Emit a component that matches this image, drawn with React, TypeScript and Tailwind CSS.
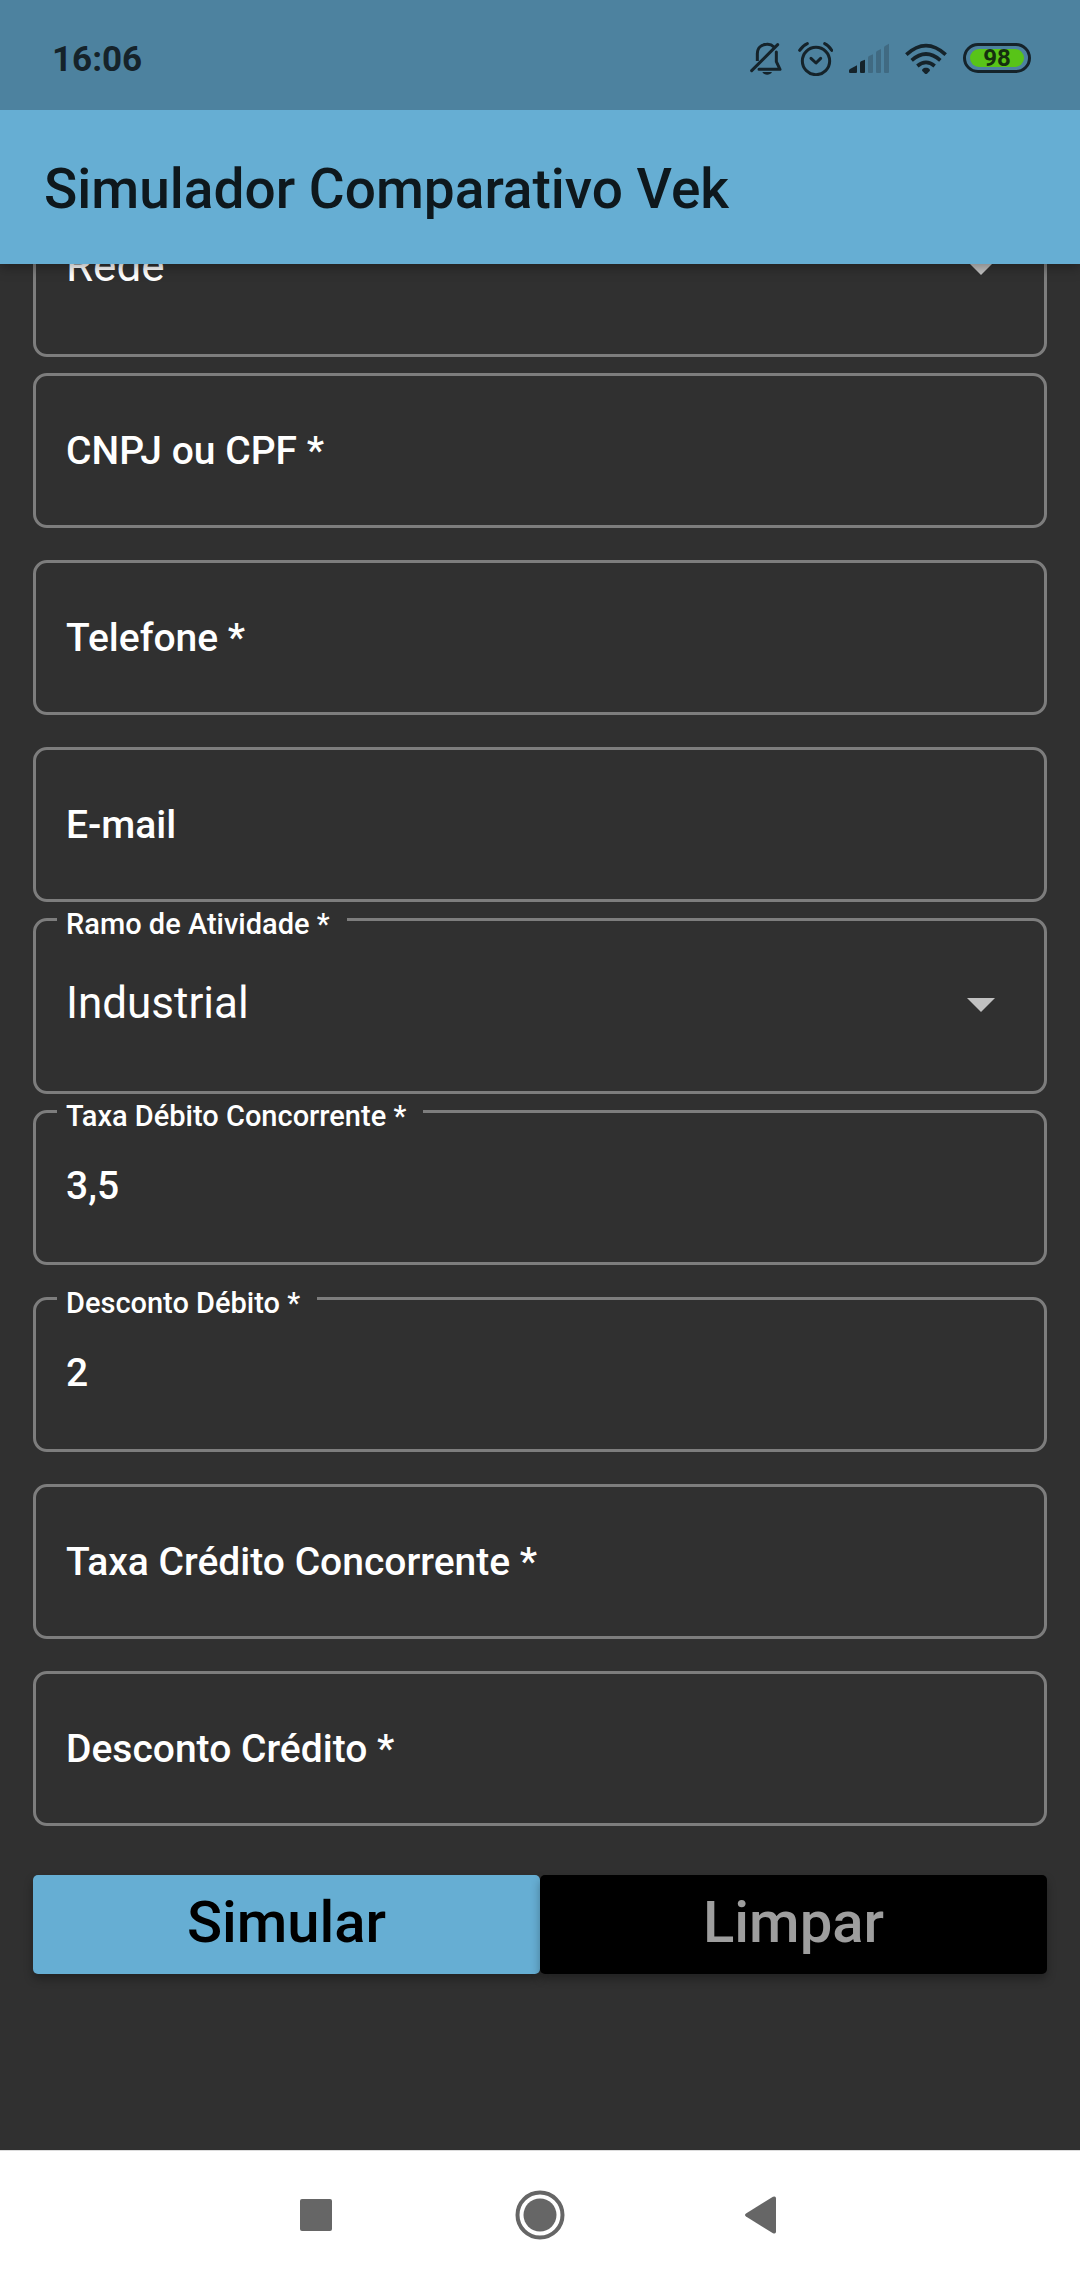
import { useId, useState } from "react";
import type { ReactNode } from "react";

function BellOffIcon() {
  return (
    <svg viewBox="60 60 96 105" className="h-[35px] w-8" fill="none" stroke="#15232a" strokeWidth="9" aria-hidden="true">
      <path d="M82 120V98C82 81 93 71 110 70C120 69 127 73 132 78" />
      <path d="M139 93V122L150 145H87" strokeLinejoin="round" strokeLinecap="round" />
      <path d="M65 149L143 71" strokeLinecap="round" />
      <path d="M97 153H126C121 164 102 164 97 153Z" fill="#15232a" stroke="none" />
    </svg>
  );
}

function AlarmIcon() {
  return (
    <svg viewBox="204 60 105 105" className="size-[35px]" fill="none" stroke="#15232a" strokeWidth="9" strokeLinecap="round" strokeLinejoin="round" aria-hidden="true">
      <circle cx="258" cy="120" r="41" />
      <path d="M243 112L258 126L272 112" />
      <path d="M209 88Q218 74 232 68M284 68Q297 74 305 88" />
    </svg>
  );
}

function SignalIcon() {
  return (
    <svg viewBox="357 60 120 105" className="h-[35px] w-10" fill="#15232a" aria-hidden="true">
      <path d="M357 148Q357 146 360 144L381 133V153Q381 156 378 156H360Q357 156 357 153Z" />
      <path d="M390 126Q390 123 393 121L405 116V153Q405 156 402 156H393Q390 156 390 153Z" />
      <g fill="#406a82">
        <path d="M414 110Q414 107 417 105L429 100V153Q429 156 426 156H417Q414 156 414 153Z" />
        <path d="M438 95Q438 92 441 90L453 84V153Q453 156 450 156H441Q438 156 438 153Z" />
        <path d="M462 80Q462 77 465 75L477 68V153Q477 156 474 156H465Q462 156 462 153Z" />
      </g>
    </svg>
  );
}

function WifiIcon() {
  return (
    <svg viewBox="525 60 126 105" className="h-[35px] w-[42px]" fill="none" stroke="#15232a" strokeWidth="11" aria-hidden="true">
      <path d="M529 101Q588 47 647 101" />
      <path d="M545 118Q588 80 631 118" />
      <path d="M562 135Q588 113 614 135" />
      <path d="M588 140C597 140 602 146 599 150L591 158Q588 160 585 158L577 150C574 146 579 140 588 140Z" fill="#15232a" stroke="none" />
    </svg>
  );
}

function Battery({ level }: { level: number }) {
  return (
    <div className="flex h-[30px] w-[68px] rounded-full border-3 border-[#15232a] px-1 py-[3px]">
      <div className="flex flex-1 items-center justify-center rounded-full bg-[#58c418] text-2xl leading-none font-bold text-[#15300f]">
        {level}
      </div>
    </div>
  );
}

function Outline({ children }: { children: ReactNode }) {
  return <div className="relative grid rounded-[14px] border-3 border-[#7d7d7d]">{children}</div>;
}

function FieldLabel({ id, floating, children }: { id: string; floating: boolean; children: ReactNode }) {
  return (
    <label
      htmlFor={id}
      className={
        floating
          ? "absolute -top-[14px] left-[21px] bg-[#303030] pr-[17px] pl-[9px] text-[29px] leading-[34px] font-medium"
          : "pointer-events-none col-start-1 row-start-1 self-center px-[30px] pt-0.5 text-[39px] leading-[45px] font-medium"
      }
    >
      {children}
    </label>
  );
}

function TextField({ label, type = "text", initial = "" }: { label: string; type?: string; initial?: string }) {
  const id = useId();
  const [value, setValue] = useState(initial);
  const [focused, setFocused] = useState(false);
  return (
    <Outline>
      <input
        id={id}
        type={type}
        value={value}
        onChange={(e) => setValue(e.target.value)}
        onFocus={() => setFocused(true)}
        onBlur={() => setFocused(false)}
        className="col-start-1 row-start-1 w-full bg-transparent px-[30px] pt-[51px] pb-[53px] text-[39px] leading-[45px] font-medium outline-none"
      />
      <FieldLabel id={id} floating={focused || value !== ""}>
        {label}
      </FieldLabel>
    </Outline>
  );
}

function SelectField({ label, name, options }: { label?: string; name: string; options: string[] }) {
  const id = useId();
  return (
    <Outline>
      <select
        id={id}
        aria-label={label ? undefined : name}
        name={name}
        className="col-start-1 row-start-1 w-full appearance-none bg-transparent px-[30px] pt-[56px] pb-[62px] text-[44px] leading-[52px] outline-none"
      >
        {options.map((option) => (
          <option key={option} className="bg-[#424242]">
            {option}
          </option>
        ))}
      </select>
      {label && (
        <FieldLabel id={id} floating>
          {label}
        </FieldLabel>
      )}
      <svg viewBox="0 0 28 16" className="pointer-events-none col-start-1 row-start-1 mr-[49px] h-4 w-7 self-center justify-self-end" fill="#c1c1c1" aria-hidden="true">
        <path d="M0 0H28L14 14Z" />
      </svg>
    </Outline>
  );
}

export default function App() {
  return (
    <div className="flex min-h-screen flex-col bg-[#303030] font-[Roboto,sans-serif] text-white">
      <header className="relative z-10 shadow-[0_3px_12px_rgba(0,0,0,0.35)]">
        <div className="flex h-[110px] items-center justify-between bg-[#4d829f] pt-1.5 pr-[49px] pl-[52px]">
          <time className="pt-1 text-[35px] font-bold text-[#15232a]">16:06</time>
          <div className="flex items-center gap-4">
            <BellOffIcon />
            <AlarmIcon />
            <SignalIcon />
            <WifiIcon />
            <Battery level={98} />
          </div>
        </div>
        <div className="flex h-[154px] items-center bg-[#66aed3] px-11 pt-1">
          <h1 className="text-[55px] font-medium text-[#0e181d]">Simulador Comparativo Vek</h1>
        </div>
      </header>

      <main className="flex-1 overflow-hidden">
        <form className="-mt-[83px] flex flex-col gap-4 px-[33px]" onSubmit={(e) => e.preventDefault()}>
          <SelectField name="Rede" options={["Rede", "Cielo", "Stone"]} />
          <div className="flex flex-col gap-8">
            <TextField label="CNPJ ou CPF *" />
            <TextField label="Telefone *" type="tel" />
            <TextField label="E-mail" type="email" />
          </div>
          <SelectField label="Ramo de Atividade *" name="ramo" options={["Industrial", "Comercial"]} />
          <div className="flex flex-col gap-8">
            <TextField label="Taxa Débito Concorrente *" initial="3,5" />
            <TextField label="Desconto Débito *" initial="2" />
            <TextField label="Taxa Crédito Concorrente *" />
            <TextField label="Desconto Crédito *" />
          </div>
          <div className="mt-[33px] mb-4 grid grid-cols-2 text-[58px] leading-[67px] font-medium">
            <button type="submit" className="rounded-[5px] bg-[#66aed3] pt-[14px] pb-[18px] text-black shadow-[0_5px_10px_rgba(0,0,0,0.3)]">
              Simular
            </button>
            <button type="reset" className="rounded-[5px] bg-black pt-[14px] pb-[18px] text-[#9e9e9e] shadow-[0_5px_10px_rgba(0,0,0,0.3)]">
              Limpar
            </button>
          </div>
        </form>
      </main>

      <nav className="flex h-[130px] items-center justify-center border-t border-[#dcdcdc] bg-white pb-0.5">
        <button type="button" aria-label="Recentes" className="flex w-56 justify-center">
          <svg viewBox="0 0 50 50" className="size-[50px]" fill="#666">
            <rect x="9" y="9" width="32" height="32" rx="2" />
          </svg>
        </button>
        <button type="button" aria-label="Início" className="flex w-56 justify-center">
          <svg viewBox="0 0 50 50" className="size-[50px]" fill="#666">
            <circle cx="25" cy="25" r="22.5" fill="none" stroke="#666" strokeWidth="4" />
            <circle cx="25" cy="25" r="16.5" />
          </svg>
        </button>
        <button type="button" aria-label="Voltar" className="flex w-56 justify-center">
          <svg viewBox="0 0 50 50" className="size-[50px]" fill="#666">
            <path d="M7 23.5L34 6.8Q37 5.500 37 8.500V41.500Q37 44.500 34 43.200L7 26.500Q5 25 7 23.500Z" />
          </svg>
        </button>
      </nav>
    </div>
  );
}
